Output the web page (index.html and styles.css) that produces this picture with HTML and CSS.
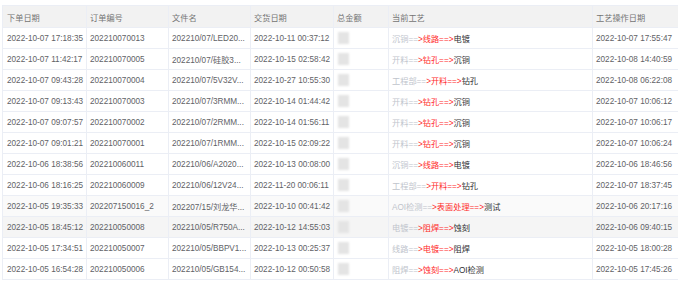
FILE: index.html
```html
<!DOCTYPE html>
<html lang="zh">
<head>
<meta charset="utf-8">
<link rel="stylesheet" href="styles.css">
</head>
<body>
<table class="grid">
  <colgroup>
    <col class="c1"><col class="c2"><col class="c3"><col class="c4"><col class="c5"><col class="c6"><col class="c7">
  </colgroup>
  <thead>
    <tr><th>下单日期</th><th>订单编号</th><th>文件名</th><th>交货日期</th><th>总金额</th><th>当前工艺</th><th>工艺操作日期</th></tr>
  </thead>
  <tbody>
    <tr><td>2022-10-07 17:18:35</td><td>202210070013</td><td>202210/07/LED20...</td><td>2022-10-11 00:37:12</td><td class="money"><span class="amt"></span></td><td><span class="prev">沉铜==</span><span class="cur">&gt;线路==&gt;</span><span class="next">电镀</span></td><td>2022-10-07 17:55:47</td></tr>
    <tr><td>2022-10-07 11:42:17</td><td>202210070005</td><td>202210/07/硅胶3...</td><td>2022-10-15 02:58:42</td><td class="money"><span class="amt"></span></td><td><span class="prev">开料==</span><span class="cur">&gt;钻孔==&gt;</span><span class="next">沉铜</span></td><td>2022-10-08 14:40:59</td></tr>
    <tr><td>2022-10-07 09:43:28</td><td>202210070004</td><td>202210/07/5V32V...</td><td>2022-10-27 10:55:30</td><td class="money"><span class="amt"></span></td><td><span class="prev">工程部==</span><span class="cur">&gt;开料==&gt;</span><span class="next">钻孔</span></td><td>2022-10-08 06:22:08</td></tr>
    <tr><td>2022-10-07 09:13:43</td><td>202210070003</td><td>202210/07/3RMM...</td><td>2022-10-14 01:44:42</td><td class="money"><span class="amt"></span></td><td><span class="prev">开料==</span><span class="cur">&gt;钻孔==&gt;</span><span class="next">沉铜</span></td><td>2022-10-07 10:06:12</td></tr>
    <tr><td>2022-10-07 09:07:57</td><td>202210070002</td><td>202210/07/2RMM...</td><td>2022-10-14 01:56:11</td><td class="money"><span class="amt"></span></td><td><span class="prev">开料==</span><span class="cur">&gt;钻孔==&gt;</span><span class="next">沉铜</span></td><td>2022-10-07 10:06:17</td></tr>
    <tr><td>2022-10-07 09:01:21</td><td>202210070001</td><td>202210/07/1RMM...</td><td>2022-10-15 02:09:22</td><td class="money"><span class="amt"></span></td><td><span class="prev">开料==</span><span class="cur">&gt;钻孔==&gt;</span><span class="next">沉铜</span></td><td>2022-10-07 10:06:24</td></tr>
    <tr><td>2022-10-06 18:38:56</td><td>202210060011</td><td>202210/06/A2020...</td><td>2022-10-13 00:08:00</td><td class="money"><span class="amt"></span></td><td><span class="prev">沉铜==</span><span class="cur">&gt;线路==&gt;</span><span class="next">电镀</span></td><td>2022-10-06 18:46:56</td></tr>
    <tr><td>2022-10-06 18:16:25</td><td>202210060009</td><td>202210/06/12V24...</td><td>2022-11-20 00:06:11</td><td class="money"><span class="amt"></span></td><td><span class="prev">工程部==</span><span class="cur">&gt;开料==&gt;</span><span class="next">钻孔</span></td><td>2022-10-07 18:37:45</td></tr>
    <tr class="stripe"><td>2022-10-05 19:35:33</td><td>202207150016_2</td><td>202207/15/刘龙华...</td><td>2022-10-10 00:41:42</td><td class="money"><span class="amt"></span></td><td><span class="prev">AOI检测==</span><span class="cur">&gt;表面处理==&gt;</span><span class="next">测试</span></td><td>2022-10-06 20:17:16</td></tr>
    <tr class="hover"><td>2022-10-05 18:45:12</td><td>202210050008</td><td>202210/05/R750A...</td><td>2022-10-12 14:55:03</td><td class="money"><span class="amt"></span></td><td><span class="prev">电镀==</span><span class="cur">&gt;阻焊==&gt;</span><span class="next">蚀刻</span></td><td>2022-10-06 09:40:15</td></tr>
    <tr><td>2022-10-05 17:34:51</td><td>202210050007</td><td>202210/05/BBPV1...</td><td>2022-10-13 00:25:37</td><td class="money"><span class="amt"></span></td><td><span class="prev">线路==</span><span class="cur">&gt;电镀==&gt;</span><span class="next">阻焊</span></td><td>2022-10-05 18:00:28</td></tr>
    <tr><td>2022-10-05 16:54:28</td><td>202210050006</td><td>202210/05/GB154...</td><td>2022-10-12 00:50:58</td><td class="money"><span class="amt"></span></td><td><span class="prev">阻焊==</span><span class="cur">&gt;蚀刻==&gt;</span><span class="next">AOI检测</span></td><td>2022-10-05 17:45:26</td></tr>
  </tbody>
</table>
</body>
</html>
```
FILE: styles.css
```css
html, body {
  margin: 0;
  padding: 0;
  background: #ffffff;
}
body {
  padding: 5px 0 0 2px;
  font-family: "Liberation Sans", "Noto Sans CJK SC", sans-serif;
  font-size: 8.2px;
  color: #5f6266;
}
.grid {
  border-collapse: collapse;
  table-layout: fixed;
  width: 676px;
}
.c1 { width: 84px; }
.c2 { width: 82px; }
.c3 { width: 82px; }
.c4 { width: 83px; }
.c5 { width: 55px; }
.c6 { width: 204px; }
.c7 { width: 86px; }
.grid th, .grid td {
  border: 1px solid #ebeef5;
  padding: 0 3px;
  text-align: left;
  white-space: nowrap;
  overflow: hidden;
  font-weight: normal;
}
.grid th {
  height: 21px;
  background: #f2f2f2;
  color: #747474;
}
.grid td {
  height: 20px;
}
.grid td:first-child, .grid th:first-child {
  padding-left: 4px;
}
.stripe td { background: #fafafa; }
.hover td { background: #f5f5f5; }
.amt {
  display: inline-block;
  width: 11px;
  height: 12px;
  margin-left: 1px;
  vertical-align: middle;
  background: #e4e4e4;
  filter: blur(1px);
}
.prev { color: #c0c4cc; }
.cur { color: #ff2a2a; }
.next { color: #303133; }
```
